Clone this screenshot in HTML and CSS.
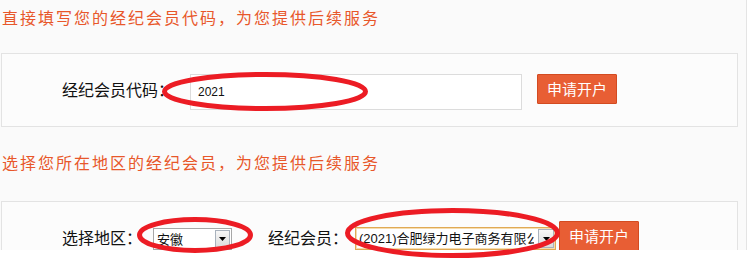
FILE: index.html
```html
<!DOCTYPE html>
<html lang="zh-CN">
<head>
<meta charset="utf-8">
<title>经纪会员</title>
<link rel="stylesheet" href="styles.css">
</head>
<body>
<div class="page">
  <div class="wrap">
    <h2 class="title">直接填写您的经纪会员代码，为您提供后续服务</h2>
    <div class="panel panel-1">
      <span class="label">经纪会员代码：</span>
      <div class="input">2021</div>
      <button class="btn">申请开户</button>
    </div>
    <h2 class="title title-2">选择您所在地区的经纪会员，为您提供后续服务</h2>
    <div class="panel panel-2">
      <span class="label">选择地区：</span>
      <div class="select sel-region">
        <span class="sel-text">安徽</span>
        <span class="sel-btn"><svg width="7" height="4" viewBox="0 0 7 4"><path d="M0 0H7L3.5 4Z" fill="#000"/></svg></span>
      </div>
      <span class="label label-member">经纪会员：</span>
      <div class="select sel-member">
        <span class="sel-text">(2021)合肥绿力电子商务有限公司</span>
        <span class="sel-btn"><svg width="7" height="4" viewBox="0 0 7 4"><path d="M0 0H7L3.5 4Z" fill="#000"/></svg></span>
      </div>
      <button class="btn btn-2">申请开户</button>
    </div>
  </div>
  <svg class="marks" width="747" height="268" viewBox="0 0 747 268">
    <ellipse cx="265" cy="91.5" rx="100.5" ry="17" fill="none" stroke="#ec1c24" stroke-width="5"/>
    <ellipse cx="195" cy="235" rx="55.5" ry="15.5" fill="none" stroke="#ec1c24" stroke-width="5"/>
    <ellipse cx="452.5" cy="233" rx="105" ry="22.5" fill="none" stroke="#ec1c24" stroke-width="5"/>
  </svg>
</div>
</body>
</html>
```
FILE: styles.css
```css
html, body {
  margin: 0;
  padding: 0;
  background: #ffffff;
}

.page {
  position: relative;
  width: 747px;
  height: 268px;
}

.wrap {
  box-sizing: border-box;
  width: 747px;
  height: 250px;
  padding-left: 1px;
  background: #fafafa;
  border-right: 1px solid #e4e4e4;
  overflow: hidden;
  font-family: "Noto Sans CJK SC", "Liberation Sans", sans-serif;
}

.title {
  margin: 0;
  padding: 7px 0 0 1px;
  font-size: 16px;
  font-weight: normal;
  line-height: 20px;
  letter-spacing: 2px;
  color: #e8572a;
  white-space: nowrap;
}

.title-2 {
  padding-top: 25px;
}

.panel {
  box-sizing: border-box;
  width: 737px;
  margin-top: 26px;
  padding-left: 60px;
  border: 1px solid #e3e3e3;
  background: #fcfcfc;
  display: flex;
  align-items: flex-start;
}

.panel-1 {
  height: 74px;
  padding-top: 20px;
}

.panel-2 {
  height: 80px;
  margin-top: 29px;
  padding-top: 19px;
}

.label {
  margin-top: 5px;
  font-size: 16px;
  line-height: 20px;
  color: #111;
  white-space: nowrap;
}

.panel-2 .label {
  margin-top: 6px;
}

.input {
  box-sizing: border-box;
  width: 332px;
  height: 36px;
  margin-left: 16px;
  padding-left: 7px;
  border: 1px solid #dcdcdc;
  background: #ffffff;
  font-family: "Liberation Sans", Arial, sans-serif;
  font-size: 12px;
  line-height: 34px;
  color: #111;
}

.btn {
  box-sizing: border-box;
  width: 80px;
  height: 30px;
  margin-left: 15px;
  padding: 0;
  border: 1px solid #d34b21;
  border-radius: 1px;
  background: #e85e34;
  color: #ffffff;
  font-family: "Noto Sans CJK SC", sans-serif;
  font-size: 15px;
  line-height: 28px;
  cursor: pointer;
}

.btn-2 {
  margin-left: 3px;
}

.select {
  box-sizing: border-box;
  display: flex;
  align-items: stretch;
  height: 22px;
  padding: 1px;
  background: #ffffff;
  font-family: "Liberation Sans", "Noto Sans CJK SC", sans-serif;
  font-size: 13px;
  color: #111;
}

.sel-region {
  width: 79px;
  margin-top: 7px;
  margin-left: 11px;
  border: 1px solid #a7a7a7;
}

.sel-member {
  width: 201px;
  height: 23px;
  margin-top: 6px;
  margin-left: 7px;
  border: 1px solid #e0aa55;
  box-shadow: inset 0 0 0 1px #f6dcae;
}

.label-member {
  margin-left: 36px;
}

.sel-text {
  flex: 1;
  overflow: hidden;
  white-space: nowrap;
  padding-left: 2px;
  line-height: 19px;
}

.sel-member .sel-text {
  margin-right: 4px;
}

.sel-btn {
  box-sizing: border-box;
  width: 15px;
  display: flex;
  align-items: center;
  justify-content: center;
  border: 1px solid #a9b2bd;
  background: linear-gradient(#f7f7f7, #dcdcdc);
}

.sel-member .sel-btn {
  width: 16px;
}

.marks {
  position: absolute;
  left: 0;
  top: 0;
  pointer-events: none;
}
```
